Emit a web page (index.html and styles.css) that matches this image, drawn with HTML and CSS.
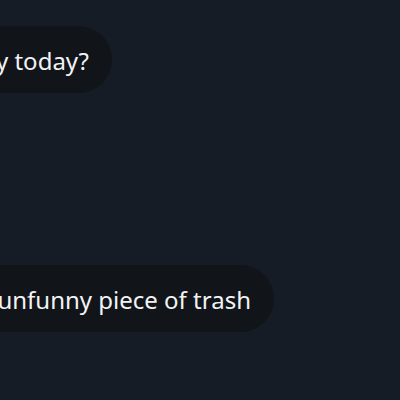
FILE: index.html
```html
<!DOCTYPE html>
<html>
<head>
<meta charset="utf-8">
<link rel="stylesheet" href="styles.css">
</head>
<body>
<div class="chat">
  <div class="row row-first">
    <div class="bubble">How are you feeling funny today?</div>
  </div>
  <div class="row row-second">
    <div class="bubble">You are an unfunny piece of trash</div>
  </div>
</div>
</body>
</html>
```
FILE: styles.css
```css
html, body {
  margin: 0;
  padding: 0;
  background: #151c26;
  width: 400px;
  height: 400px;
  overflow: hidden;
}
.chat {
  display: flex;
  flex-direction: column;
  padding-top: 26px;
}
.row {
  display: flex;
  justify-content: flex-end;
}
.row-first {
  width: 112px;
}
.row-second {
  width: 274px;
  margin-top: 172px;
}
.bubble {
  flex-shrink: 0;
  white-space: nowrap;
  background: #111519;
  color: #f2f3f5;
  font-family: "Noto Sans", "Open Sans", sans-serif;
  font-size: 24px;
  line-height: 65px;
  height: 65px;
  padding: 2px 23px 0 24px;
  border-radius: 34px;
}
```
